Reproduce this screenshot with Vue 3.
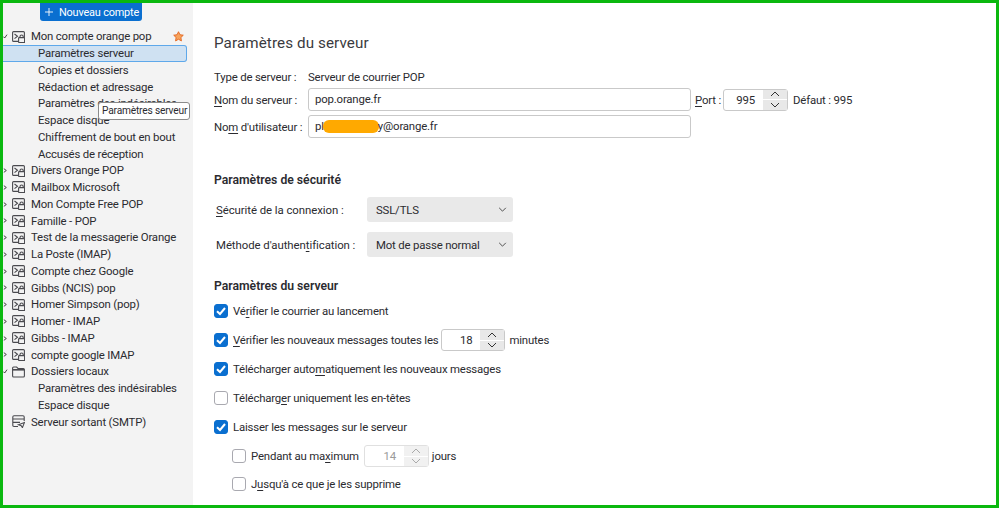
<script setup>
const tree = [
  { t: 'Mon compte orange pop', icon: 'acc', open: true, star: true },
  { t: 'Paramètres serveur', sub: true, cur: true },
  { t: 'Copies et dossiers', sub: true },
  { t: 'Rédaction et adressage', sub: true },
  { t: 'Paramètres des indésirables', sub: true },
  { t: 'Espace disque', sub: true },
  { t: 'Chiffrement de bout en bout', sub: true },
  { t: 'Accusés de réception', sub: true },
  ...['Divers Orange POP', 'Mailbox Microsoft', 'Mon Compte Free POP', 'Famille - POP', 'Test de la messagerie Orange', 'La Poste (IMAP)', 'Compte chez Google', 'Gibbs (NCIS) pop', 'Homer Simpson (pop)', 'Homer - IMAP', 'Gibbs - IMAP', 'compte google IMAP'].map((t) => ({ t, icon: 'acc', closed: true })),
  { t: 'Dossiers locaux', icon: 'folder', open: true },
  { t: 'Paramètres des indésirables', sub: true },
  { t: 'Espace disque', sub: true },
  { t: 'Serveur sortant (SMTP)', icon: 'smtp' },
]
</script>

<template>
  <div class="frame">
    <aside class="side">
      <div class="newbtn"><svg class="plus" viewBox="0 0 9 9"><path d="M4.5 0V9M0 4.5H9" /></svg>Nouveau compte</div>
      <div class="tree">
        <div v-for="(n, i) in tree" :key="i" class="row" :class="{ sub: n.sub, cur: n.cur }">
          <svg v-if="n.open" class="tw" viewBox="0 0 6 6"><path d="M0.5 3.2 2 4.8 4.8 0.8" /></svg>
          <svg v-else-if="n.closed" class="tw" viewBox="0 0 6 6"><path d="M1 0.8 4 3 1 5.2" /></svg>
          <svg v-if="n.icon === 'acc'" class="ic" viewBox="0 0 13 12">
            <path d="M1.6.6H11.4Q12.4.6 12.4 1.6V9.4Q12.4 10.4 11.4 10.4H1.6Q.6 10.4.6 9.4V1.6Q.6.6 1.6.6Z" />
            <path d="M2.5 3 5.5 5.3 2.5 7.6" />
            <rect x="6.6" y="6.6" width="6" height="5" rx=".6" class="fillic" />
            <path d="M8 6.6V5.6Q8 4 9.6 4 11.2 4 11.2 5.6V6.6" />
          </svg>
          <svg v-else-if="n.icon === 'folder'" class="ic" viewBox="0 0 13 12">
            <path d="M.6 2Q.6 1 1.6 1H4.6L6 2.5H11.4Q12.4 2.5 12.4 3.5V10Q12.4 11 11.4 11H1.6Q.6 11 .6 10Z" />
            <path d="M.8 3.8H12.2" class="thick" />
          </svg>
          <svg v-else-if="n.icon === 'smtp'" class="ic smtp" viewBox="0 0 13 13">
            <path d="M6 11.5H2Q.8 11.5.8 10.3V2Q.8.7 2 .7H11Q12.2.7 12.2 2V6" />
            <path d="M1 4H12M1 7.4H8" />
            <path d="M6.5 9.8 12.4 7.6 10.4 12.6 9.2 10.6Z" class="fillic" />
          </svg>
          <span class="tx">{{ n.t }}</span>
          <svg v-if="n.star" class="star" viewBox="0 0 12 12"><path d="M6 .8 7.6 4.1 11.2 4.6 8.6 7.1 9.2 10.8 6 9 2.8 10.8 3.4 7.1.8 4.6 4.4 4.1Z" /></svg>
        </div>
      </div>
      <div class="tip">Paramètres serveur</div>
    </aside>

    <main class="main">
      <h1>Paramètres du serveur</h1>
      <div class="type"><span class="l1">Type de serveur :</span><span>Serveur de courrier POP</span></div>
      <div class="frow first">
        <label class="l1"><u>N</u>om du serveur :</label>
        <div class="inp">pop.orange.fr</div>
        <label class="port"><u>P</u>ort :</label>
        <div class="spin portspin"><span class="val">995</span><span class="btns"><i><svg viewBox="0 0 10 6"><path d="M1 5 5 1 9 5" /></svg></i><i><svg viewBox="0 0 10 6"><path d="M1 1 5 5 9 1" /></svg></i></span></div>
        <span class="def">Défaut : 995</span>
      </div>
      <div class="frow">
        <label class="l1">No<u>m</u> d'utilisateur :</label>
        <div class="inp user">pl<span class="mask"></span>y@orange.fr</div>
      </div>

      <h2 class="sec">Paramètres de sécurité</h2>
      <div class="selrow"><label><u>S</u>écurité de la connexion :</label><div class="sel">SSL/TLS<svg viewBox="0 0 10 6"><path d="M1 1 5 5 9 1" /></svg></div></div>
      <div class="selrow two"><label>Méthode d'authen<u>t</u>ification :</label><div class="sel">Mot de passe normal<svg viewBox="0 0 10 6"><path d="M1 1 5 5 9 1" /></svg></div></div>

      <h2 class="sec2">Paramètres du serveur</h2>
      <div class="ck"><b class="box on"><svg viewBox="0 0 14 14"><path d="M3 7.2 6 10 11 4" /></svg></b><span>Vé<u>r</u>ifier le courrier au lancement</span></div>
      <div class="ck"><b class="box on"><svg viewBox="0 0 14 14"><path d="M3 7.2 6 10 11 4" /></svg></b><span><u>V</u>érifier les nouveaux messages toutes les</span>
        <div class="spin min"><span class="val">18</span><span class="btns"><i><svg viewBox="0 0 10 6"><path d="M1 5 5 1 9 5" /></svg></i><i><svg viewBox="0 0 10 6"><path d="M1 1 5 5 9 1" /></svg></i></span></div><span>minutes</span></div>
      <div class="ck"><b class="box on"><svg viewBox="0 0 14 14"><path d="M3 7.2 6 10 11 4" /></svg></b><span>Télécharger auto<u>m</u>atiquement les nouveaux messages</span></div>
      <div class="ck"><b class="box"></b><span>Télécharg<u>e</u>r uniquement les en-têtes</span></div>
      <div class="ck"><b class="box on"><svg viewBox="0 0 14 14"><path d="M3 7.2 6 10 11 4" /></svg></b><span>Laisser les messages sur le serveur</span></div>
      <div class="ck nest"><b class="box"></b><span>Pendant au ma<u>x</u>imum</span>
        <div class="spin dis"><span class="val">14</span><span class="btns"><i><svg viewBox="0 0 10 6"><path d="M1 5 5 1 9 5" /></svg></i><i><svg viewBox="0 0 10 6"><path d="M1 1 5 5 9 1" /></svg></i></span></div><span>jours</span></div>
      <div class="ck nest"><b class="box"></b><span>J<u>u</u>squ'à ce que je les supprime</span></div>
    </main>
  </div>
</template>

<style>
html, body { margin: 0; background: #fff; }
</style>

<style scoped>
.frame {
  width: 999px; height: 508px; box-sizing: border-box;
  border: 3px solid #0ab80f; display: flex; overflow: hidden;
  background: #fff; color: #2b2b30;
  font-family: Roboto, "Open Sans", sans-serif; font-size: 11.4px; letter-spacing: -.18px;
}
u { text-decoration-thickness: 1px; text-underline-offset: 2px; }
.side { width: 190px; flex: none; background: #f3f3f3; position: relative; }
.newbtn {
  margin-left: 37px; width: 102px; height: 18px; box-sizing: border-box; padding-left: 5px; background: #0a6fd0; color: #fff; white-space: nowrap;
  border-radius: 0 0 3px 3px; display: flex; align-items: center; font-size: 10.9px;
}
.plus { width: 8px; height: 8px; margin-right: 6px; fill: none; stroke: #fff; stroke-width: 1; }
.tree { margin-top: 7px; }
.row { height: 16.75px; display: flex; align-items: center; position: relative; padding-left: 28px; white-space: nowrap; box-sizing: border-box; }
.row.sub { padding-left: 35px; }
.row.cur { background: #cfe1f2; border: 1px solid #5ea8ea; border-left: none; border-radius: 0 3px 3px 0; width: 184px; }
.tw { position: absolute; left: 0; top: 6px; width: 5px; height: 5px; fill: none; stroke: #222; stroke-width: 1; }
.ic { position: absolute; left: 9px; top: 2.5px; width: 13px; height: 12px; fill: none; stroke: #4a4a4f; stroke-width: 1.1; }
.ic.smtp { height: 13px; top: 2px; }
.fillic { fill: #f3f3f3; }
.thick { stroke-width: 1.6; }
.star { position: absolute; left: 170px; top: 3px; width: 11px; height: 11px; fill: #f7a35c; stroke: #e2641c; stroke-width: 1; }
.tip {
  position: absolute; left: 95px; top: 99px; height: 18px; width: 92px; padding-left: 3px; line-height: 16px;
  background: #fff; border: 1px solid #8b8b8b; border-radius: 3px; font-size: 10.2px; white-space: nowrap; box-sizing: border-box;
}
.main { flex: 1; padding-left: 21px; white-space: nowrap; }
h1 { margin: 29px 0 0; font-size: 15.2px; line-height: 22px; font-weight: 400; letter-spacing: .1px; color: #3a3a40; }
.type { display: flex; margin-top: 15px; height: 16px; line-height: 16px; }
.l1 { width: 94px; flex: none; }
.frow { display: flex; align-items: center; margin-top: 4px; height: 23px; }
.frow.first { margin-top: 3px; }
.inp { width: 383px; height: 23px; box-sizing: border-box; border: 1px solid #c9c9c9; border-radius: 3px; padding-left: 6px; line-height: 21px; position: relative; background: #fff; }
.mask { display: inline-block; width: 56px; height: 13px; vertical-align: -3px; margin: 0 -1px 0 -1px; background: #ffa900; border-radius: 6px; }
.port { margin-left: 4px; width: 28px; }
.spin { display: flex; box-sizing: border-box; height: 22px; width: 65px; border: 1px solid #c9c9c9; border-radius: 3px; background: #fff; }
.val { flex: 1; text-align: right; padding-right: 8px; line-height: 20px; }
.btns { width: 24px; flex: none; display: flex; flex-direction: column; gap: 1px; }
.btns i { flex: 1; background: #e8e8e8; display: flex; align-items: center; justify-content: center; }
.btns svg { width: 10px; height: 6px; fill: none; stroke: #333; stroke-width: 1; }
.def { margin-left: 5px; }
.sec { margin: 34px 0 0; font-size: 12.2px; letter-spacing: 0; line-height: 16px; font-weight: 600; }
.sec2 { margin: 21px 0 0; font-size: 12.2px; letter-spacing: 0; line-height: 16px; font-weight: 600; }
.selrow { display: flex; align-items: center; margin-top: 9px; padding-left: 2px; height: 25px; }
.selrow.two { margin-top: 10px; }
.selrow label { width: 151px; flex: none; letter-spacing: -.06px; }
.sel { width: 146px; height: 25px; box-sizing: border-box; background: #e9e9e9; border-radius: 3px; padding-left: 9px; display: flex; align-items: center; position: relative; }
.sel svg { position: absolute; right: 6px; top: 10px; width: 9px; height: 5px; fill: none; stroke: #333; stroke-width: 1; }
.ck { display: flex; align-items: center; height: 22px; margin-top: 7px; }
.sec2 + .ck { margin-top: 6px; }
.box { width: 14px; height: 14px; box-sizing: border-box; flex: none; margin-right: 5px; border: 1px solid #a9a9b0; border-radius: 3px; background: #fff; }
.box.on { background: #0a6fd0; border-color: #0a6fd0; position: relative; }
.box svg { display: block; position: absolute; left: -1px; top: -1px; width: 14px; height: 14px; fill: none; stroke: #fff; stroke-width: 2; }
.nest { padding-left: 18px; }
.min { margin: 0 4px 0 3px; width: 64px; }
.dis { margin: 0 3px 0 5px; color: #9a9a9a; border-color: #e0e0e0; }
.dis .btns i { background: #f1f1f1; }
.dis .btns svg { stroke: #aaa; }
.ck.nest + .ck.nest { margin-top: 6px; }
</style>
